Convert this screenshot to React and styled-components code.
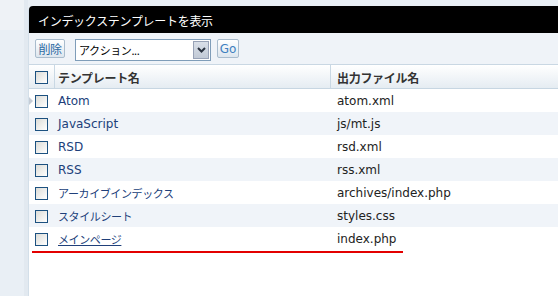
import React from 'react';
import styled, { createGlobalStyle } from 'styled-components';

const GlobalStyle = createGlobalStyle`
  html, body {
    margin: 0;
    padding: 0;
    background: #e9eff5;
    font-family: "DejaVu Sans", "Noto Sans CJK JP", sans-serif;
    font-size: 12px;
  }
`;

const Page = styled.div`
  display: flex;
  width: 558px;
  height: 296px;
  overflow: hidden;
`;

const Sidebar = styled.div`
  width: 24px;
  flex-shrink: 0;
  border-right: 4px solid #e2e9f0;
  background: linear-gradient(#eef2f6 0, #eef2f6 30px, #e9eff5 30px);
`;

const Panel = styled.div`
  flex: 1;
  margin-top: 6px;
  background: #fff;
  border-left: 1px solid #d3dfe9;
  border-top-left-radius: 5px;
  display: flex;
  flex-direction: column;
`;

const TitleBar = styled.div`
  height: 27px;
  background: #000;
  color: #fff;
  display: flex;
  align-items: center;
  padding: 1px 0 0 9px;
  box-sizing: border-box;
  border-top-left-radius: 4px;
  font-family: "Noto Sans CJK JP", sans-serif;
  font-size: 12px;
  letter-spacing: -0.3px;
`;

const Toolbar = styled.div`
  height: 32px;
  background: #eff3f8;
  border-bottom: 1px solid #c9d7e3;
  display: flex;
  align-items: flex-start;
  padding: 6px 0 0 6px;
  box-sizing: border-box;
`;

const Button = styled.div`
  height: 19px;
  padding: 0 2px;
  box-sizing: border-box;
  border: 1px solid #a9bccd;
  border-radius: 2px;
  background: linear-gradient(#ffffff, #dde6ee);
  color: ${p => (p.$latin ? '#3f7fc0' : '#2c6aa3')};
  display: flex;
  align-items: center;
  justify-content: center;
  width: ${p => p.$width}px;
  margin-left: ${p => p.$gap || 0}px;
  font-family: ${p => (p.$latin ? '"DejaVu Sans", sans-serif' : '"Noto Sans CJK JP", sans-serif')};
  font-size: 12px;
  letter-spacing: ${p => (p.$latin ? 0 : -0.5)}px;
`;

const Select = styled.div`
  margin-left: 10px;
  width: 136px;
  height: 22px;
  box-sizing: border-box;
  border: 1px solid #7f9db9;
  background: #fff;
  display: flex;
  align-items: stretch;
`;

const SelectText = styled.span`
  flex: 1;
  display: flex;
  align-items: center;
  padding-left: 3px;
  font-family: "Noto Sans CJK JP", sans-serif;
  font-size: 11px;
  letter-spacing: -0.4px;
  color: #000;
`;

const SelectArrow = styled.span`
  width: 16px;
  margin: 1px;
  box-sizing: border-box;
  border: 1px solid #98a2b6;
  background: linear-gradient(#d9dfe8, #c2cad6);
  display: flex;
  align-items: center;
  justify-content: center;
`;

const Row = styled.div`
  display: grid;
  grid-template-columns: 26px 276px 1fr;
  height: 23px;
  background: ${p =>
    p.$head ? 'linear-gradient(#ffffff, #e5ecf2)' : p.$alt ? '#f0f4f9' : '#ffffff'};
  border-bottom: ${p => (p.$head ? '1px solid #c7d6e2' : 'none')};
`;

const Cell = styled.div`
  display: flex;
  align-items: center;
  padding-left: ${p => p.$pad}px;
  padding-top: 1px;
  border-right: ${p => (p.$divider ? '1px solid #c9d8e4' : 'none')};
  font-weight: ${p => (p.$head ? 'bold' : 'normal')};
  color: ${p => (p.$head ? '#333' : '#222')};
  white-space: nowrap;
  overflow: hidden;
`;

const Marker = styled.span`
  width: 0;
  height: 0;
  border-top: 4px solid transparent;
  border-bottom: 4px solid transparent;
  border-left: 4px solid ${p => (p.$on ? '#c4ccd6' : 'transparent')};
  margin-right: 2px;
`;

const Check = styled.span`
  width: 13px;
  height: 13px;
  box-sizing: border-box;
  border: 1px solid #1c5180;
  background: linear-gradient(135deg, #dcdcd7, #ffffff);
`;

const NameLink = styled.a`
  color: #20407a;
  text-decoration: ${p => (p.$hover ? 'underline' : 'none')};
  font-family: ${p => (p.$jp ? '"Noto Sans CJK JP", sans-serif' : 'inherit')};
  font-size: ${p => (p.$jp ? 11 : 12)}px;
  letter-spacing: ${p => (p.$jp ? -0.4 : 0)}px;
`;

const HeadText = styled.span`
  font-family: "Noto Sans CJK JP", sans-serif;
  letter-spacing: -0.3px;
`;

const RedRule = styled.div`
  margin: 1px 0 0 3px;
  width: 371px;
  height: 2px;
  background: #e30000;
`;

const rows = [
  ['Atom', 'atom.xml'],
  ['JavaScript', 'js/mt.js'],
  ['RSD', 'rsd.xml'],
  ['RSS', 'rss.xml'],
  ['アーカイブインデックス', 'archives/index.php', true],
  ['スタイルシート', 'styles.css', true],
  ['メインページ', 'index.php', true],
];

export default function App() {
  return (
    <>
      <GlobalStyle />
      <Page>
        <Sidebar />
        <Panel>
          <TitleBar>インデックステンプレートを表示</TitleBar>
          <Toolbar>
            <Button $width={30}>削除</Button>
            <Select>
              <SelectText>アクション...</SelectText>
              <SelectArrow>
                <svg width="9" height="6" viewBox="0 0 9 6">
                  <path d="M1 1 L4.5 4.5 L8 1" fill="none" stroke="#2b3340" strokeWidth="2" />
                </svg>
              </SelectArrow>
            </Select>
            <Button $width={22} $gap={6} $latin>Go</Button>
          </Toolbar>
          <Row $head>
            <Cell $pad={6} $divider>
              <Check />
            </Cell>
            <Cell $pad={3} $divider $head>
              <HeadText>テンプレート名</HeadText>
            </Cell>
            <Cell $pad={6} $head>
              <HeadText>出力ファイル名</HeadText>
            </Cell>
          </Row>
          {rows.map(([name, file, jp], i) => (
            <Row key={name} $alt={i % 2 === 1}>
              <Cell $pad={0}>
                <Marker $on={i === 0} />
                <Check />
              </Cell>
              <Cell $pad={3}>
                <NameLink href="#" $jp={jp} $hover={i === rows.length - 1}>{name}</NameLink>
              </Cell>
              <Cell $pad={6}>{file}</Cell>
            </Row>
          ))}
          <RedRule />
        </Panel>
      </Page>
    </>
  );
}
